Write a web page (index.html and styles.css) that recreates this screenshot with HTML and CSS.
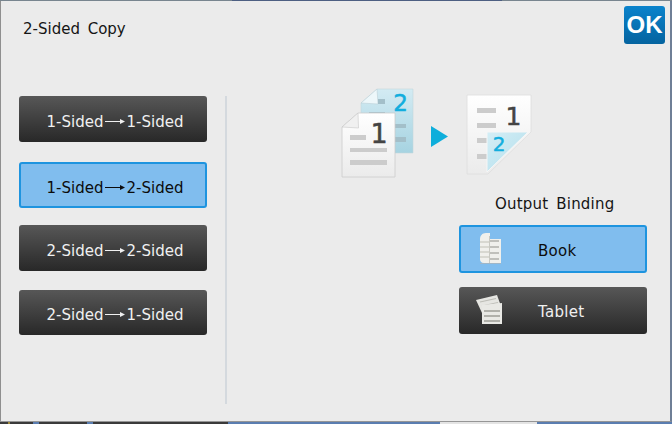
FILE: index.html
```html
<!DOCTYPE html>
<html>
  <head>
    <title>2-Sided Copy</title>
    <link rel="stylesheet" href="styles.css">
  </head>
  <body>
    <div class="edge edge-top">
      <div class="seg seg-grey"></div>
      <div class="seg seg-navy"></div>
      <div class="seg seg-grey2"></div>
    </div>
    <div class="dialog">
      <div class="header">
        <div class="title">2-Sided Copy</div>
        <div class="ok">OK</div>
      </div>
      <div class="main">
        <div class="modes">
          <div class="btn">1-Sided<svg class="arrow" width="21" height="7" viewBox="0 0 21 7"><path d="M0 3.500H16" stroke="currentColor" stroke-width="1"/><path d="M15 1L20 3.500L15 6Z" fill="currentColor"/></svg>1-Sided</div>
          <div class="btn selected">1-Sided<svg class="arrow" width="21" height="7" viewBox="0 0 21 7"><path d="M0 3.500H16" stroke="currentColor" stroke-width="1"/><path d="M15 1L20 3.500L15 6Z" fill="currentColor"/></svg>2-Sided</div>
          <div class="btn">2-Sided<svg class="arrow" width="21" height="7" viewBox="0 0 21 7"><path d="M0 3.500H16" stroke="currentColor" stroke-width="1"/><path d="M15 1L20 3.500L15 6Z" fill="currentColor"/></svg>2-Sided</div>
          <div class="btn">2-Sided<svg class="arrow" width="21" height="7" viewBox="0 0 21 7"><path d="M0 3.500H16" stroke="currentColor" stroke-width="1"/><path d="M15 1L20 3.500L15 6Z" fill="currentColor"/></svg>1-Sided</div>
        </div>
        <div class="divider"></div>
        <div class="side">
          <svg class="diagram" width="196" height="92" viewBox="0 0 196 92">
            <defs>
              <linearGradient id="cyanpage" x1="0" y1="0" x2="0" y2="1">
                <stop offset="0" stop-color="#d3ebf3"/>
                <stop offset="1" stop-color="#a6d3e1"/>
              </linearGradient>
              <linearGradient id="whitepage" x1="0" y1="0" x2="0" y2="1">
                <stop offset="0" stop-color="#ffffff"/>
                <stop offset="1" stop-color="#ebebeb"/>
              </linearGradient>
              <linearGradient id="fold" x1="0" y1="0" x2="1" y2="1">
                <stop offset="0" stop-color="#d4eef6"/>
                <stop offset="1" stop-color="#b2deeb"/>
              </linearGradient>
            </defs>
            <path d="M21 15L37 1H73V65H21Z" fill="url(#cyanpage)" stroke="#c4d6dc" stroke-width="0.600"/>
            <path d="M21 15L37 1L38 16Z" fill="#edf7fa" stroke="#bcd0d6" stroke-width="0.600"/>
            <g fill="#a3bfc9">
              <rect x="38" y="11" width="7" height="5"/>
              <rect x="29" y="24" width="16" height="5"/>
              <rect x="55" y="36" width="11" height="4"/>
              <rect x="55" y="49" width="11" height="5"/>
            </g>
            <text class="num cyan" x="60.500" y="23" text-anchor="middle">2</text>
            <path d="M2 39L18 25H55V89H2Z" fill="url(#whitepage)" stroke="#cccccc" stroke-width="0.800"/>
            <path d="M2 39L18 25L18.500 40Z" fill="#f0f0f0" stroke="#c8c8c8" stroke-width="0.600"/>
            <g fill="#cccccc">
              <rect x="10" y="47" width="16" height="5"/>
              <rect x="10" y="60" width="37" height="4"/>
              <rect x="10" y="72" width="37" height="5"/>
            </g>
            <text class="num dark big" x="39" y="55" text-anchor="middle">1</text>
            <path d="M91 38L108 48.500L91 59Z" fill="#0eaedb"/>
            <path d="M127 7H191V44L148 86H127Z" fill="url(#whitepage)" stroke="#dddddd" stroke-width="0.800"/>
            <g fill="#cccccc">
              <rect x="137" y="20" width="19" height="5"/>
              <rect x="137" y="35" width="19" height="5"/>
              <rect x="137" y="50" width="11" height="5"/>
              <rect x="137" y="66" width="11" height="5"/>
            </g>
            <text class="num dark mid" x="173.500" y="37" text-anchor="middle">1</text>
            <path d="M147 44H188L147 84Z" fill="url(#fold)" stroke="#f6f6f6" stroke-width="1"/>
            <text class="num cyan small" x="159" y="63" text-anchor="middle">2</text>
          </svg>
          <div class="label">Output Binding</div>
          <div class="btn wide selected">
            <svg class="icon" width="24" height="32" viewBox="0 0 24 32">
              <path d="M8 0H12V6H23V30H6C3 30 2 28 2 26V6C2 3 4 0 8 0Z" fill="#f0f0ec"/>
              <path d="M2 9H11M2 14H11M2 19H11M2 24H11" stroke="#cfcfc8" stroke-width="1.300"/>
              <path d="M12 8H21M12 14H21M12 20H21M12 26H21" stroke="#8f8f89" stroke-width="1.200"/>
              <path d="M11.500 3V30" stroke="#c9c9c2" stroke-width="1"/>
              <path d="M2 30.500H23" stroke="#9fb6c8" stroke-width="1"/>
            </svg>
            <span>Book</span>
          </div>
          <div class="btn wide">
            <svg class="icon" width="28" height="32" viewBox="0 0 28 32">
              <path d="M0 5L21 0L26 14L6 18Z" fill="#e6e6e2"/>
              <path d="M4 7L20 3.500M6 11L22 7.500" stroke="#bdbdb7" stroke-width="1.200"/>
              <path d="M6 10L26 8V29H6Z" fill="#e9e9e5"/>
              <path d="M8 16H24M8 21H24M8 26H24" stroke="#9d9d97" stroke-width="1.500"/>
            </svg>
            <span>Tablet</span>
          </div>
        </div>
      </div>
    </div>
    <div class="edge edge-bottom">
      <div class="seg seg-dark">
        <div class="pip pip-gold"></div>
        <div class="pip pip-blue1"></div>
        <div class="pip pip-blue2"></div>
      </div>
      <div class="seg seg-blue"></div>
      <div class="seg seg-light"></div>
      <div class="seg seg-blue2"></div>
    </div>
  </body>
</html>
```

FILE: styles.css
```css
html, body {
  margin: 0;
  padding: 0;
}
body {
  width: 672px;
  height: 424px;
  overflow: hidden;
  font-family: "DejaVu Sans", sans-serif;
  display: flex;
  flex-direction: column;
}
.edge {
  display: flex;
}
.edge-top {
  height: 1px;
}
.edge-bottom {
  height: 2px;
}
.seg-grey {
  width: 232px;
  background: #78858f;
}
.seg-navy {
  width: 270px;
  background: #4d5f82;
}
.seg-grey2 {
  flex: 1;
  background: #78858f;
}
.seg-dark {
  width: 228px;
  background: #3a3a3a;
  display: flex;
}
.pip {
  height: 2px;
}
.pip-gold {
  width: 2px;
  margin-left: 8px;
  background: #a08a3c;
}
.pip-blue1 {
  width: 6px;
  margin-left: 23px;
  background: #5a7db0;
}
.pip-blue2 {
  width: 6px;
  margin-left: 48px;
  background: #5a7db0;
}
.seg-blue {
  width: 212px;
  background: #5a7db0;
}
.seg-light {
  width: 97px;
  background: #e4e4e4;
}
.seg-blue2 {
  flex: 1;
  background: #5a7db0;
}
.dialog {
  height: 421px;
  box-sizing: border-box;
  background: #ebebeb;
  border-left: 1px solid #8f8f8f;
  border-right: 2px solid #6f7f96;
  border-bottom: 1px solid #969696;
  display: flex;
  flex-direction: column;
}
.header {
  height: 47px;
  display: flex;
  justify-content: space-between;
  padding-top: 5px;
  padding-left: 22px;
  padding-right: 5px;
  box-sizing: border-box;
}
.title {
  font-size: 15px;
  line-height: 18px;
  margin-top: 14px;
  color: #151515;
  word-spacing: 3px;
}
.ok {
  width: 41px;
  height: 38px;
  background: linear-gradient(#0b83cc, #04639f);
  border-radius: 3px;
  color: #fff;
  font-family: "Liberation Sans", sans-serif;
  font-weight: bold;
  font-size: 24px;
  line-height: 38px;
  text-align: center;
}
.main {
  display: flex;
  margin-top: 48px;
}
.modes {
  margin-left: 18px;
  width: 188px;
  display: flex;
  flex-direction: column;
}
.modes .btn {
  padding-top: 5px;
}
.modes .btn:nth-child(2) {
  margin-top: 20px;
}
.modes .btn:nth-child(3) {
  margin-top: 17px;
}
.modes .btn:nth-child(4) {
  margin-top: 19px;
  height: 45px;
  padding-top: 4px;
}
.btn {
  height: 46px;
  box-sizing: border-box;
  border-radius: 3px;
  background: linear-gradient(#575757, #282828);
  color: #f0f0f0;
  font-size: 15px;
  display: flex;
  align-items: center;
  justify-content: center;
  padding-top: 3px;
  padding-left: 4px;
}
.btn.selected {
  background: #80bdee;
  border: 2px solid #1e94df;
  color: #0c0c0c;
}
.arrow {
  margin: 0 1px;
}
.divider {
  width: 2px;
  height: 308px;
  background: #d4d9de;
  margin-left: 18px;
}
.side {
  margin-left: 113px;
  width: 300px;
  display: flex;
  flex-direction: column;
}
.diagram {
  margin-top: -8px;
}
.num {
  font-size: 23px;
  stroke-width: 0.500;
}
.big {
  font-size: 27px;
}
.mid {
  font-size: 25px;
}
.small {
  font-size: 20px;
}
.cyan {
  fill: #12aede;
  stroke: #12aede;
}
.dark {
  fill: #444444;
  stroke: #444444;
}
.label {
  font-size: 15px;
  line-height: 18px;
  color: #151515;
  margin-top: 15px;
  margin-left: 155px;
  letter-spacing: 0.200px;
  word-spacing: 3px;
}
.wide {
  width: 188px;
  margin-left: 119px;
  position: relative;
  height: 47px;
  justify-content: flex-start;
  padding-left: 79px;
}
.wide span {
  letter-spacing: 0.300px;
}
.wide.selected {
  height: 48px;
  margin-top: 12px;
  margin-bottom: 14px;
  padding-left: 77px;
}
.icon {
  position: absolute;
  left: 17px;
  top: 8px;
}
.wide.selected .icon {
  left: 17px;
  top: 6px;
}
```
